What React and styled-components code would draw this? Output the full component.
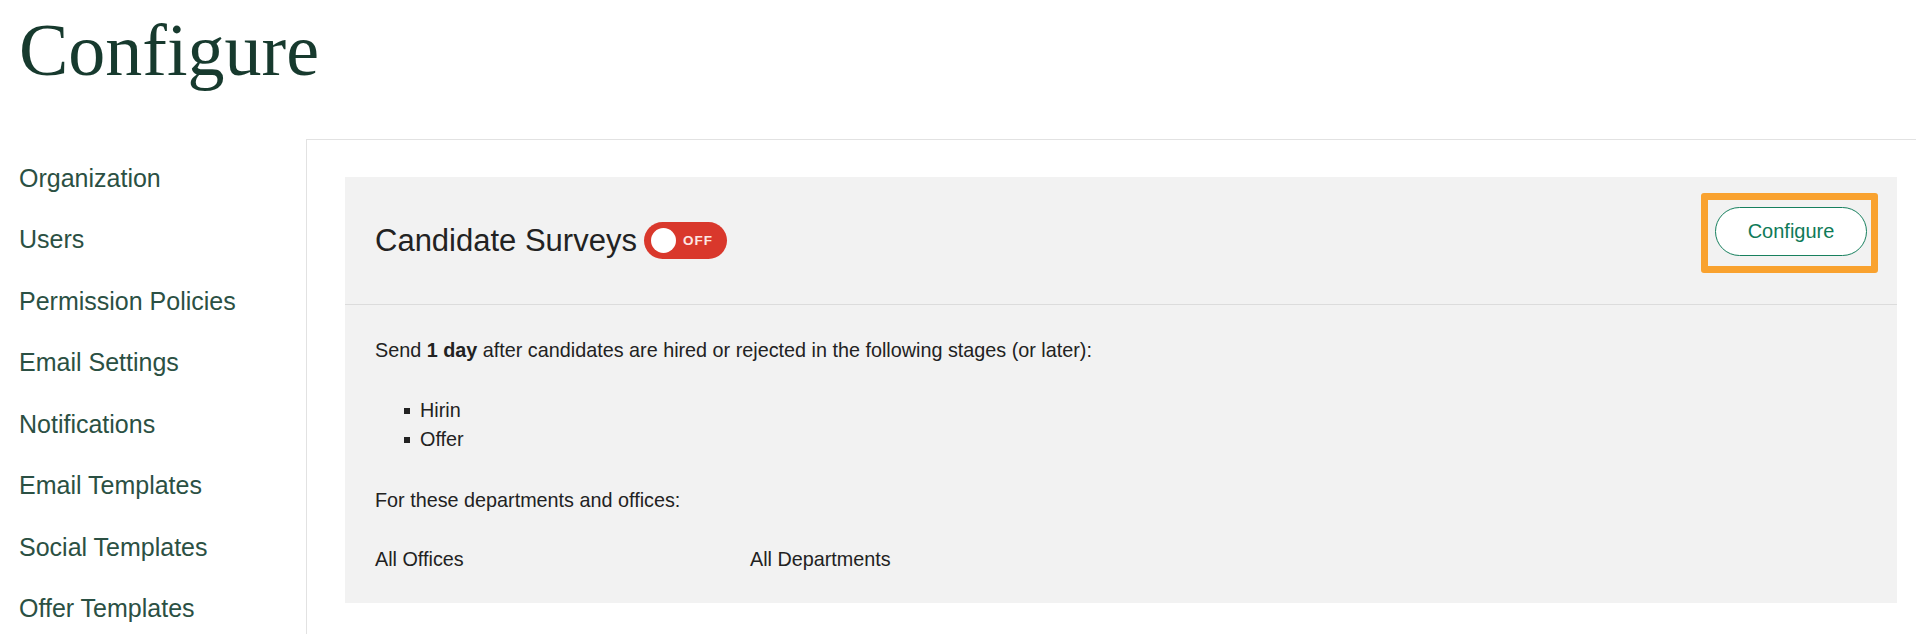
import styled, { createGlobalStyle } from "styled-components";

const GlobalStyle = createGlobalStyle`
  body {
    margin: 0;
    background: #fff;
    font-family: "Liberation Sans", Arial, sans-serif;
  }
`;

const Page = styled.div`
  width: 100%;
  min-height: 634px;
`;

const Header = styled.header`
  height: 139px;
  box-sizing: border-box;
  padding: 13px 0 0 19px;
`;

const PageTitle = styled.h1`
  margin: 0;
  font-family: "Liberation Serif", "Times New Roman", serif;
  font-weight: 400;
  font-size: 74px;
  line-height: 74px;
  color: #173a2e;
`;

const Layout = styled.div`
  display: flex;
  min-height: 495px;
`;

const Sidebar = styled.nav`
  width: 306px;
  flex-shrink: 0;
  box-sizing: border-box;
  padding: 8px 0 0 19px;
`;

const NavItem = styled.div`
  font-size: 25px;
  line-height: 30px;
  padding: 15.75px 0;
  color: #2b5043;
`;

const Main = styled.main`
  flex: 1;
  border-top: 1px solid #e2e2e2;
  border-left: 1px solid #e2e2e2;
  padding: 37px 19px 0 38px;
`;

const Card = styled.section`
  background: #f2f2f2;
`;

const CardHeader = styled.div`
  height: 128px;
  box-sizing: border-box;
  display: flex;
  align-items: center;
  padding: 0 19px 0 30px;
  border-bottom: 1px solid #dcdcdc;
`;

const CardTitle = styled.h2`
  margin: 0;
  font-size: 31px;
  font-weight: 400;
  color: #222;
`;

const Toggle = styled.span`
  display: flex;
  align-items: center;
  gap: 7px;
  width: 83px;
  height: 37px;
  box-sizing: border-box;
  padding-left: 7px;
  margin-left: 7px;
  border-radius: 19px;
  background: ${(props) => (props.on ? "#0f7b59" : "#d9382c")};
`;

const Knob = styled.span`
  width: 25px;
  height: 25px;
  border-radius: 50%;
  background: #fff;
`;

const ToggleLabel = styled.span`
  font-size: 13.5px;
  font-weight: 700;
  letter-spacing: 1px;
  color: #fde6e3;
`;

const Spacer = styled.div`
  flex: 1;
`;

const Highlight = styled.div`
  align-self: flex-start;
  margin-top: 16px;
  border: 7px solid #f9a22f;
  border-radius: 3px;
  padding: 7px 4px 10px 7px;
`;

const OutlineButton = styled.button`
  display: block;
  width: 152px;
  height: 49px;
  border: 1px solid #17805e;
  border-radius: 25px;
  background: #fff;
  color: #0f7a58;
  font-family: "Liberation Sans", Arial, sans-serif;
  font-size: 20px;
  cursor: pointer;
`;

const CardBody = styled.div`
  padding: 31px 30px 29px;
  font-size: 19.8px;
  line-height: 29px;
  color: #222;
`;

const Text = styled.p`
  margin: ${(props) => (props.spaced ? "32px 0 0" : "0")};
`;

const StageList = styled.ul`
  margin: 31px 0 0;
  padding: 0;
  list-style: none;
`;

const Stage = styled.li`
  position: relative;
  padding-left: 45px;

  &::before {
    content: "";
    position: absolute;
    left: 29px;
    top: 12px;
    width: 6px;
    height: 6px;
    background: #222;
  }
`;

const Scope = styled.div`
  display: grid;
  grid-template-columns: 375px auto;
  margin-top: 30px;
`;

const navItems = [
  "Organization",
  "Users",
  "Permission Policies",
  "Email Settings",
  "Notifications",
  "Email Templates",
  "Social Templates",
  "Offer Templates",
];

const stages = ["Hirin", "Offer"];

export default function App() {
  return (
    <Page>
      <GlobalStyle />
      <Header>
        <PageTitle>Configure</PageTitle>
      </Header>
      <Layout>
        <Sidebar>
          {navItems.map((item) => (
            <NavItem key={item}>{item}</NavItem>
          ))}
        </Sidebar>
        <Main>
          <Card>
            <CardHeader>
              <CardTitle>Candidate Surveys</CardTitle>
              <Toggle>
                <Knob />
                <ToggleLabel>OFF</ToggleLabel>
              </Toggle>
              <Spacer />
              <Highlight>
                <OutlineButton>Configure</OutlineButton>
              </Highlight>
            </CardHeader>
            <CardBody>
              <Text>
                Send <b>1 day</b> after candidates are hired or rejected in the
                following stages (or later):
              </Text>
              <StageList>
                {stages.map((stage) => (
                  <Stage key={stage}>{stage}</Stage>
                ))}
              </StageList>
              <Text spaced>For these departments and offices:</Text>
              <Scope>
                <span>All Offices</span>
                <span>All Departments</span>
              </Scope>
            </CardBody>
          </Card>
        </Main>
      </Layout>
    </Page>
  );
}
